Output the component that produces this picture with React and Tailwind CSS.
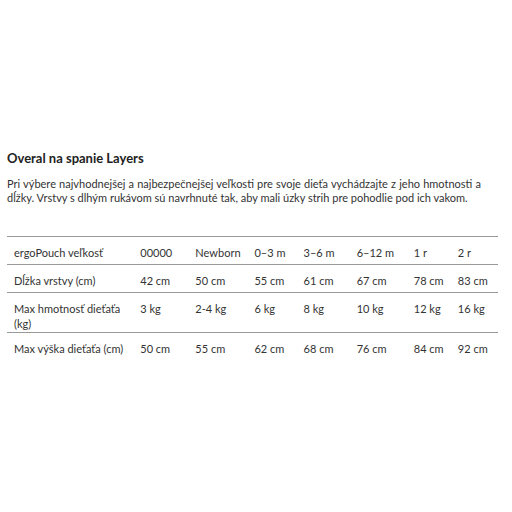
import React from 'react';

const rows = [
  ['ergoPouch veľkosť', '00000', 'Newborn', '0–3 m', '3–6 m', '6–12 m', '1 r', '2 r'],
  ['Dĺžka vrstvy (cm)', '42 cm', '50 cm', '55 cm', '61 cm', '67 cm', '78 cm', '83 cm'],
  ['Max hmotnosť dieťaťa (kg)', '3 kg', '2-4 kg', '6 kg', '8 kg', '10 kg', '12 kg', '16 kg'],
  ['Max výška dieťaťa (cm)', '50 cm', '55 cm', '62 cm', '68 cm', '76 cm', '84 cm', '92 cm'],
];

const widths = ['w-[126px]', 'w-[55px]', 'w-[59px]', 'w-[49px]', 'w-[53px]', 'w-[57px]', 'w-[44px]', 'w-[47px]'];

const App = () => {
  return (
    <div className="w-[512px] h-[512px] bg-white text-[#333] font-['Lato','Open_Sans',sans-serif] text-[11px] pt-[150px] px-[7px]">
      <h2 className="font-bold text-[13px] leading-[16px] text-[#222]">Overal na spanie Layers</h2>
      <div className="mt-[11px] w-[474px] text-[11px] leading-[13.5px]">
        <p className="text-justify [text-align-last:justify]">
          Pri výbere najvhodnejšej a najbezpečnejšej veľkosti pre svoje dieťa vychádzajte z jeho hmotnosti a
        </p>
        <p>dĺžky. Vrstvy s dlhým rukávom sú navrhnuté tak, aby mali úzky strih pre pohodlie pod ich vakom.</p>
      </div>
      <table className="mt-[32px] w-[491px] border-collapse table-fixed">
        <tbody>
          {rows.map((row, i) => (
            <tr key={i} className={i < 3 ? 'border-t border-b border-[#999]' : 'border-t border-[#999]'}>
              {row.map((cell, j) => (
                <td
                  key={j}
                  className={`${widths[j]} align-top pl-[7px] pr-1 pt-2 leading-[15px] ${i === 2 ? 'pb-[1px]' : 'pb-[4px]'}`}
                >
                  {cell}
                </td>
              ))}
            </tr>
          ))}
        </tbody>
      </table>
    </div>
  );
};

export default App;
